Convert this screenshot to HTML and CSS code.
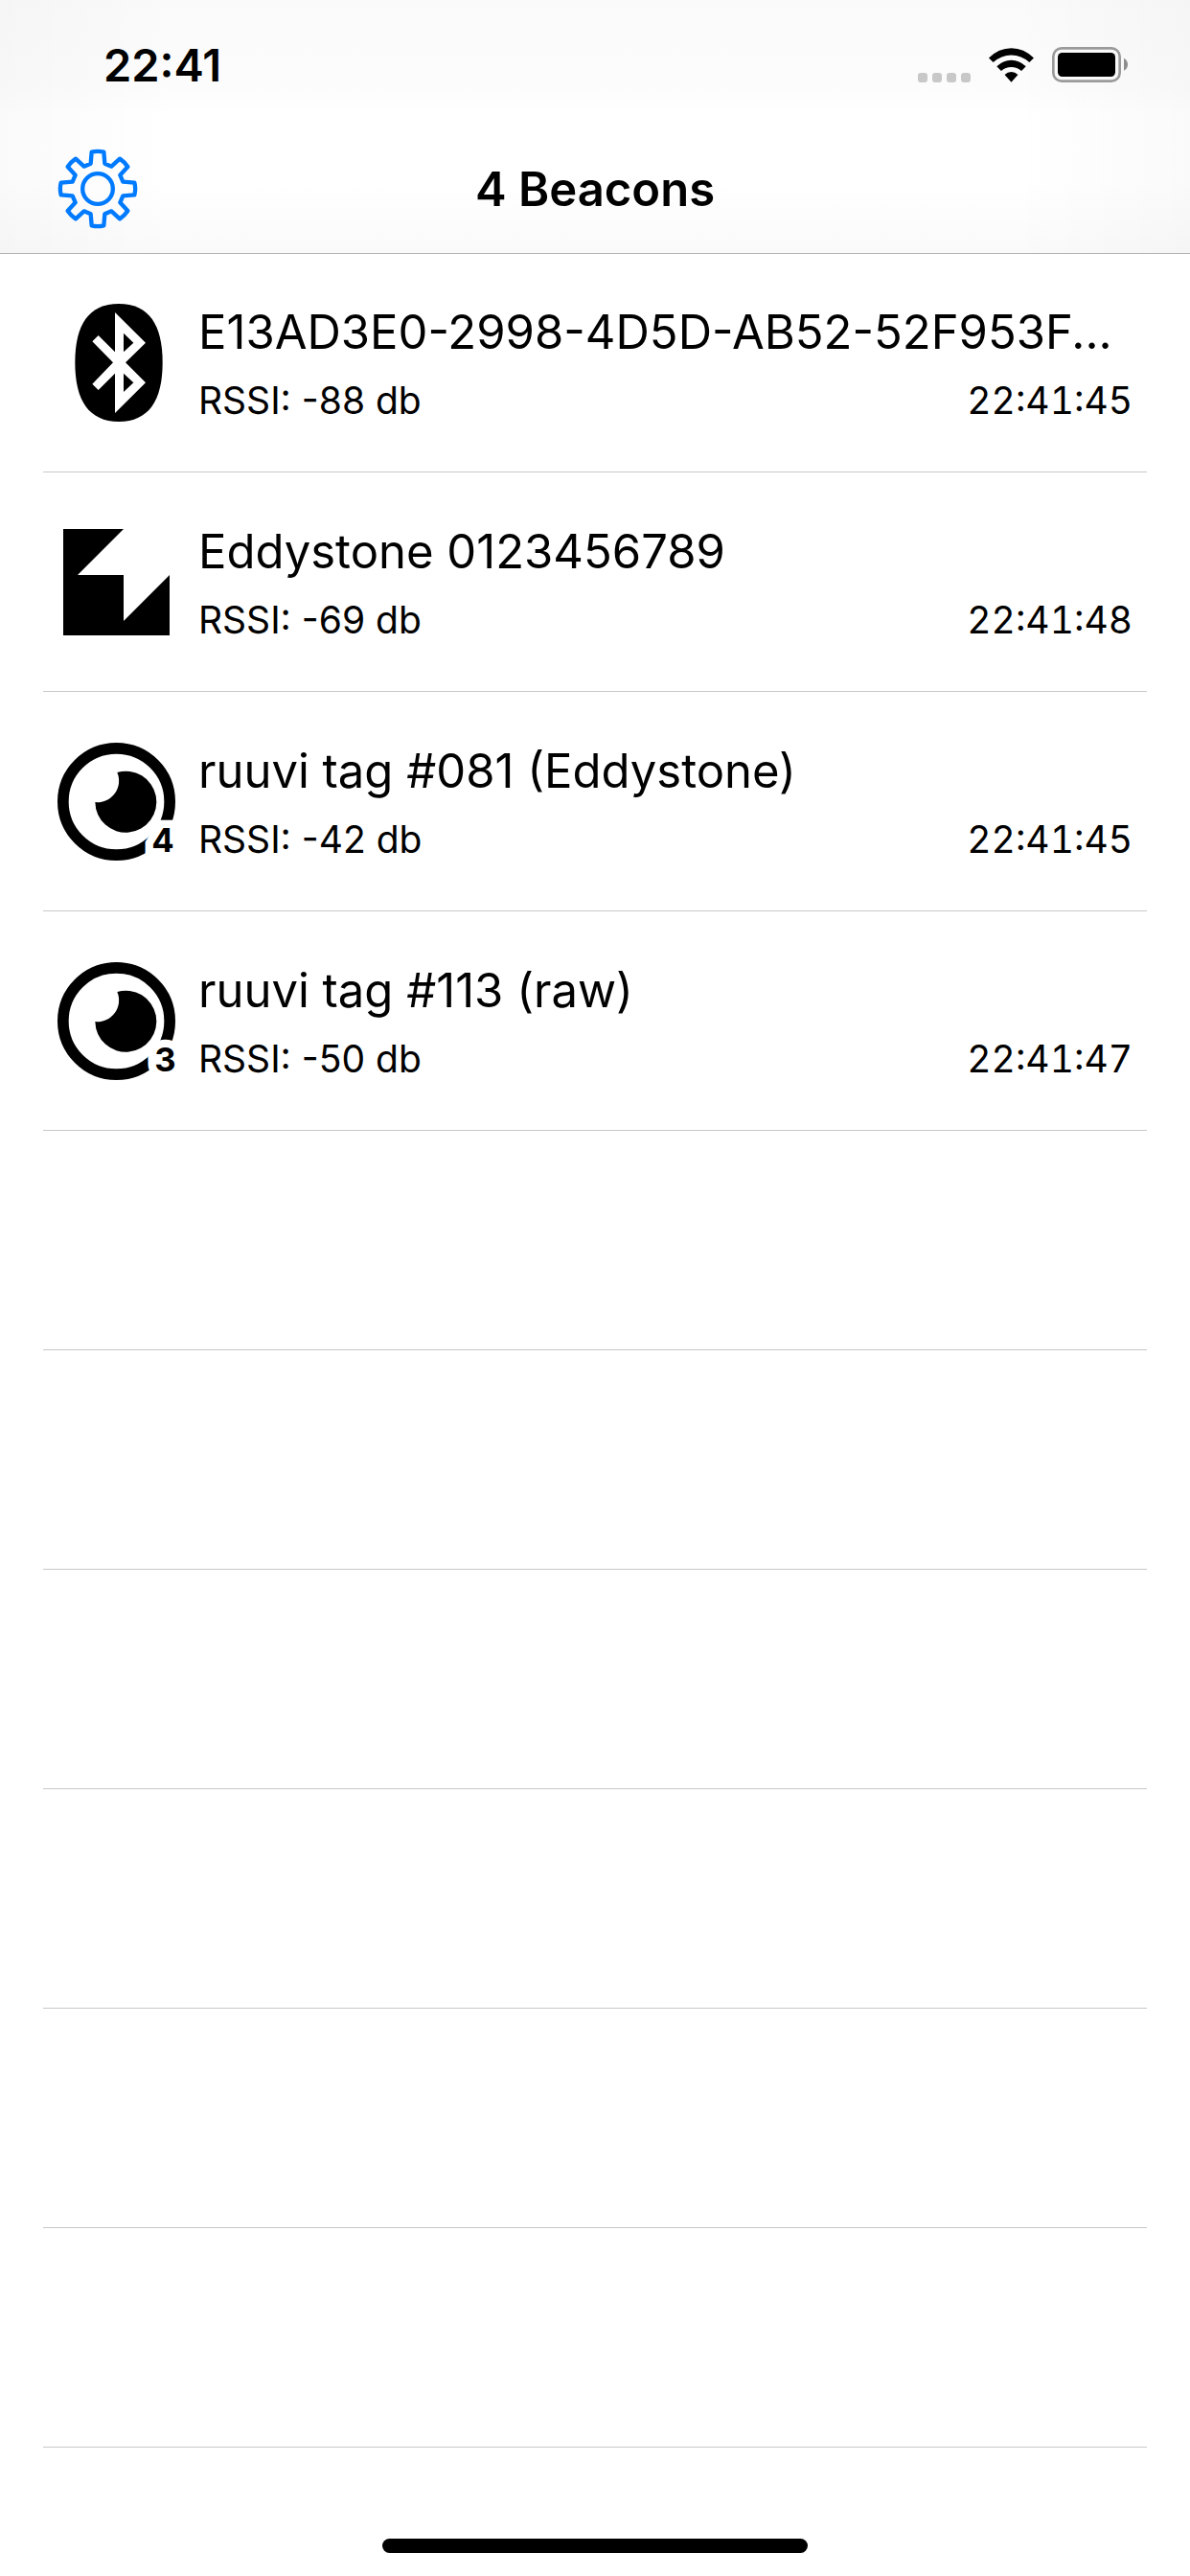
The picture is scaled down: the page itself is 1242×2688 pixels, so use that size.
FILE: index.html
```html
<!DOCTYPE html>
<html lang="en">
<head>
  <meta charset="UTF-8">
  <meta name="viewport" content="width=device-width">
  <title>Beacons</title>
  <link rel="stylesheet" href="styles.css">
</head>
<body>
  <header class="top">
    <!-- Status bar -->
    <div class="status-bar">
      <span class="clock">22:41</span>
      <div class="status-icons">
        <div class="signal"><i></i><i></i><i></i><i></i></div>
        <svg class="wifi" viewBox="0 0 142 108" aria-hidden="true">
          <path d="M0 31Q31 0 71 0T142 31L128 45Q103 22 71 22T14 45Z"/>
          <path d="M25 58Q45 38 71 38T117 58L103 72Q89 60 71 60T39 72Z"/>
          <path d="M50 84Q59 75 71 75T92 84L71 108Z"/>
        </svg>
        <svg class="battery" viewBox="0 0 237 111" aria-hidden="true">
          <rect x="4" y="4" width="208" height="103" rx="26" fill="none" stroke="#9a9a9a" stroke-width="8"/>
          <rect x="18" y="18" width="180" height="75" rx="14"/>
          <path d="M225 35Q237 41 237 55T225 74Z" fill="#8e8e8e"/>
        </svg>
      </div>
    </div>
    <!-- Navigation bar -->
    <nav class="nav-bar">
      <button class="settings" type="button" aria-label="Settings">
        <svg viewBox="-126 -126 252 252" fill="none" stroke="#007aff" stroke-width="13" stroke-linejoin="round">
          <circle r="47.5"/>
          <path d="M-19-115Q0-120 19-115L22-79L43-70L69-94Q84-84 94-69L70-43L79-22L115-19Q120 0 115 19L79 22L70 43L94 69Q84 84 69 94L43 70L22 79L19 115Q0 120-19 115L-22 79L-43 70L-69 94Q-84 84-94 69L-70 43L-79 22L-115 19Q-120 0-115-19L-79-22L-70-43L-94-69Q-84-84-69-94L-43-70L-22-79Z"/>
        </svg>
      </button>
      <h1>4 Beacons</h1>
    </nav>
  </header>

  <!-- Beacon list -->
  <main>
    <ul class="beacons">
      <li class="beacon">
        <svg class="beacon-icon" viewBox="60 81 369 369" aria-hidden="true">
          <path d="M252 81C346 81 389 146 389 265S346 450 252 450 115 384 115 265 158 81 252 81Z"/>
          <path fill="#fff" fill-rule="evenodd" d="M240 108L336 203L273 265L336 328L240 423V299L188 351L169 332L234 265L169 199L188 180L240 232ZM267 173V232L298 203ZM267 299V357L298 328Z"/>
        </svg>
        <div class="info">
          <h2>E13AD3E0-2998-4D5D-AB52-52F953F...</h2>
          <div class="details"><span>RSSI: -88 db</span><time>22:41:45</time></div>
        </div>
      </li>
      <li class="beacon">
        <svg class="beacon-icon" viewBox="60 78 369 369" aria-hidden="true">
          <path d="M78 96H267L123 240H267V384L411 240V429H78Z"/>
        </svg>
        <div class="info">
          <h2>Eddystone 0123456789</h2>
          <div class="details"><span>RSSI: -69 db</span><time>22:41:48</time></div>
        </div>
      </li>
      <li class="beacon">
        <svg class="beacon-icon" viewBox="60 75 369 369" aria-hidden="true">
          <circle cx="244.5" cy="259.5" r="167" fill="none" stroke="#000" stroke-width="35"/>
          <path d="M247 168A96 96 0 1 1 178 261A67 67 0 0 0 247 168Z"/>
          <text class="version" x="425" y="418">4</text>
        </svg>
        <div class="info">
          <h2>ruuvi tag #081 (Eddystone)</h2>
          <div class="details"><span>RSSI: -42 db</span><time>22:41:45</time></div>
        </div>
      </li>
      <li class="beacon">
        <svg class="beacon-icon" viewBox="60 75 369 369" aria-hidden="true">
          <circle cx="244.5" cy="259.5" r="167" fill="none" stroke="#000" stroke-width="35"/>
          <path d="M247 168A96 96 0 1 1 178 261A67 67 0 0 0 247 168Z"/>
          <text class="version" x="431" y="418">3</text>
        </svg>
        <div class="info">
          <h2>ruuvi tag #113 (raw)</h2>
          <div class="details"><span>RSSI: -50 db</span><time>22:41:47</time></div>
        </div>
      </li>
      <!-- Empty rows -->
      <li class="beacon"></li>
      <li class="beacon"></li>
      <li class="beacon"></li>
      <li class="beacon"></li>
      <li class="beacon"></li>
      <li class="beacon"></li>
    </ul>
  </main>

  <div class="home-indicator"></div>
</body>
</html>
```
FILE: styles.css
```css
* {
  box-sizing: border-box;
}

body {
  margin: 0;
  min-height: 100vh;
  display: flex;
  flex-direction: column;
  background: #fff;
  color: #000;
  font-family: Inter, sans-serif;
}

.top {
  background:
    linear-gradient(90deg, rgba(0,0,0,0.02), transparent 15%, transparent 85%, rgba(0,0,0,0.02)),
    linear-gradient(#fafafa, #fcfcfc 90px, #fff 120px, #fff 190px, #fafafa);
  box-shadow: 0 1px #b2b2b2;
}

/* Status bar */
.status-bar {
  height: 134px;
  padding: 0 65px 0 108px;
  display: flex;
  align-items: center;
  justify-content: space-between;
}

.clock {
  font-size: 47px;
  font-weight: 600;
}

.status-icons {
  display: flex;
  align-items: flex-end;
  gap: 19px;
}

.signal {
  display: flex;
  gap: 5px;
}

.signal i {
  width: 10px;
  height: 10px;
  border-radius: 3px;
  background: #c8c8c8;
}

.wifi {
  width: 47px;
  height: 36px;
}

.battery {
  width: 79px;
  height: 37px;
}

/* Navigation bar */
.nav-bar {
  height: 130px;
  padding: 0 60px 4px;
  display: grid;
  grid-template-columns: 1fr auto 1fr;
  align-items: center;
}

.settings {
  width: 84px;
  height: 84px;
  padding: 0;
  border: none;
  background: none;
  cursor: pointer;
}

.settings svg {
  display: block;
  width: 100%;
}

h1 {
  margin: 0;
  font-size: 49px;
  font-weight: 600;
}

/* Beacon list */
.beacons {
  list-style: none;
  margin: 0 45px;
  padding: 0;
}

.beacon {
  height: 229px;
  padding: 0 15px;
  display: flex;
  align-items: center;
  gap: 24px;
  border-bottom: 1px solid #c8c8c8;
}

.beacon-icon {
  flex: none;
  width: 123px;
  height: 123px;
}

.version {
  font-size: 104px;
  font-weight: 700;
  text-anchor: end;
  stroke: #fff;
  stroke-width: 50px;
  paint-order: stroke;
}

.info {
  flex: 1;
  min-width: 0;
  padding-top: 8px;
}

h2 {
  margin: 0;
  font-size: 49px;
  font-weight: 400;
  line-height: 72px;
  white-space: nowrap;
}

.details {
  display: flex;
  justify-content: space-between;
  font-size: 39px;
  line-height: 70px;
}

time {
  font-variant-numeric: tabular-nums;
}

.home-indicator {
  width: 444px;
  height: 15px;
  margin: auto auto 24px;
  border-radius: 8px;
  background: #000;
}
```
